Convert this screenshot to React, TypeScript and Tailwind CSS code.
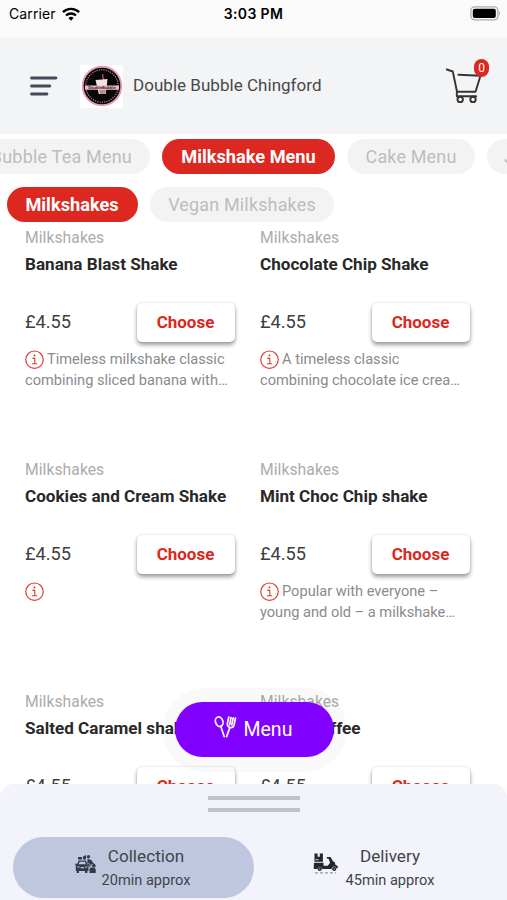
import React from "react";

type Product = { name: string; lines: string[] };

const products: Product[] = [
  { name: "Banana Blast Shake", lines: ["Timeless milkshake classic", "combining sliced banana with…"] },
  { name: "Chocolate Chip Shake", lines: ["A timeless classic", "combining chocolate ice crea…"] },
  { name: "Cookies and Cream Shake", lines: [] },
  { name: "Mint Choc Chip shake", lines: ["Popular with everyone –", "young and old – a milkshake…"] },
  { name: "Salted Caramel shake", lines: [] },
  { name: "Sticky Toffee", lines: [] },
];

function InfoIcon() {
  return (
    <svg className="mr-[3px] h-[20px] w-[19px] shrink-0" viewBox="0 0 19 20" fill="none" stroke="#dc3a35">
      <circle cx="9.5" cy="9.7" r="8.7" strokeWidth="1.2" />
      <path d="M7.3 8.4h2.5v5.3M7 13.7h5.2" strokeWidth="1.1" />
      <circle cx="9.4" cy="5.5" r="1" fill="#dc3a35" stroke="none" />
    </svg>
  );
}

function StatusBar() {
  return (
    <div className="flex h-[38px] shrink-0 items-start bg-[#fafafa] font-['Inter',sans-serif] text-black">
      <div className="flex w-[170px] items-center pt-[4px] pl-[9px]">
        <span className="text-[14px] leading-[20px] tracking-[0.1px]">Carrier</span>
        <svg className="ml-[6px] h-[14px] w-[18px]" viewBox="0 0 18 14" fill="none" stroke="#000">
          <path d="M.9 5.2a11.6 11.6 0 0 1 16.2 0" strokeWidth="2.4" />
          <path d="M4 8.5a7.3 7.3 0 0 1 10 0" strokeWidth="2.3" />
          <path d="M6.4 10.9a4 4 0 0 1 5.2 0L9 13.7z" fill="#000" stroke="none" />
        </svg>
      </div>
      <div className="flex-1 pt-[4px] text-center text-[14px] leading-[20px] font-semibold tracking-[0.35px]">3:03 PM</div>
      <div className="flex w-[170px] justify-end pt-[6px] pr-[6px]">
        <svg className="h-[15px] w-[31px]" viewBox="0 0 31 15">
          <rect x=".9" y=".9" width="27" height="13" rx="3.8" fill="#fafafa" stroke="#aaa" strokeWidth="1.3" />
          <rect x="2.8" y="2.7" width="23" height="9.4" rx="2" />
          <path d="M29 5q2 2.4 0 4.8z" fill="#aaa" />
        </svg>
      </div>
    </div>
  );
}

function Logo() {
  return (
    <svg className="ml-[22px] h-[43px] w-[43px]" viewBox="0 0 43 43">
      <path d="M0 0h43v43H0z" fill="#fff" />
      <circle cx="22" cy="21" r="19.3" fill="#080608" stroke="#ea9ab2" strokeWidth="1.9" />
      <circle cx="22" cy="21" r="16.2" fill="none" stroke="#999" strokeWidth="1.3" strokeDasharray="1.1 1.2" strokeDashoffset="1" />
      <path d="m23.5 15-1-6" stroke="#d94d75" strokeWidth="1.2" />
      <path d="m15.5 15 12-1-1.7 15h-7z" fill="#eee4e5" />
      <path d="m19 25 7-.5-.6 4.5H20z" fill="#b4908b" />
      <path d="M5 20.5h34v4.2H5z" fill="#e9b9c5" />
      <text x="22" y="24.1" textAnchor="middle" fontFamily="Roboto, sans-serif" fontSize="4.4" fontWeight="700" fill="#4a3038">DoubleBubble</text>
    </svg>
  );
}

function Header() {
  return (
    <header className="flex h-[96px] shrink-0 items-center bg-[#f3f4f6] pl-[30px]">
      <svg className="h-[20px] w-[28px]" viewBox="0 0 28 20" stroke="#454959" strokeWidth="2.9" strokeLinecap="round">
        <path d="M1.5 2h24.4M1.5 10h18.3M1.5 18h15.4" />
      </svg>
      <Logo />
      <span className="ml-[10px] text-[17px] tracking-[0.03px] whitespace-nowrap text-[#484848]">Double Bubble Chingford</span>
      <div className="relative -mt-[10px] mr-[18px] ml-auto h-[48px] w-[44px]">
        <svg className="h-[48px] w-[44px]" viewBox="0 0 44 48" fill="none" stroke="#343434" strokeWidth="1.9" strokeLinecap="round" strokeLinejoin="round">
          <path d="m1.8 12.5 6 2 4.2 20.3h18.5l5-16L13.4 17.8" />
          <path d="M11.8 34.8v4.4h19.4" />
          <circle cx="15.2" cy="42.4" r="2.7" />
          <circle cx="28" cy="42.4" r="2.7" />
        </svg>
        <span className="absolute top-[2px] left-[29px] flex h-[18px] w-[15px] items-center justify-center rounded-full bg-[#dc2820] text-[12px] text-white">0</span>
      </div>
    </header>
  );
}

const pill = "flex h-[35px] shrink-0 items-center justify-center rounded-full whitespace-nowrap";
const idle = "bg-[#f3f3f3] text-[18px] text-[#bdbdbd]";
const active = "bg-[#dc2820] text-[18.2px] font-bold text-white";

function Tabs() {
  return (
    <>
      <div className="mt-[5px] flex shrink-0 gap-[12px] overflow-hidden">
        <div className={`${pill} ${idle} -ml-[30px] w-[180px] justify-end pr-[18px] tracking-[0.2px]`}>Bubble Tea Menu</div>
        <div className={`${pill} ${active} w-[173px]`}>Milkshake Menu</div>
        <div className={`${pill} ${idle} w-[128px] tracking-[0.15px]`}>Cake Menu</div>
        <div className={`${pill} ${idle} w-[100px] justify-start pl-[17px]`}>Juices</div>
      </div>
      <div className="mt-[13px] flex shrink-0 gap-[12px] pl-[7px]">
        <div className={`${pill} ${active} w-[131px] pr-[1px]`}>Milkshakes</div>
        <div className={`${pill} ${idle} w-[184px] tracking-[0.15px]`}>Vegan Milkshakes</div>
      </div>
    </>
  );
}

function ProductCard({ product }: { product: Product }) {
  return (
    <article className="h-[232px] w-[210px]">
      <p className="h-[20px] pt-[1px] text-[15.7px] leading-[20px] tracking-[0.05px] text-[#acacac]">Milkshakes</p>
      <h3 className="mt-[5px] text-[17.1px] leading-[24px] font-bold whitespace-nowrap text-[#292929]">{product.name}</h3>
      <div className="mt-[26px] flex h-[40px] items-center justify-between">
        <span className="text-[18.2px] text-[#404040]">£4.55</span>
        <button className="h-[39px] w-[98px] rounded-[5px] bg-white pt-[1px] pr-[1px] text-[17px] font-bold text-[#dc2820] shadow-[0_3px_4px_rgba(0,0,0,0.38),0_0_2px_rgba(0,0,0,0.18)]">Choose</button>
      </div>
      <div className="mt-[7px] text-[14.6px] leading-[21px] whitespace-nowrap text-[#8a8a8f]">
        <div className="flex h-[21px] items-center">
          <InfoIcon />
          {product.lines[0]}
        </div>
        <div>{product.lines[1]}</div>
      </div>
    </article>
  );
}

function MenuButton() {
  return (
    <div className="absolute top-[688px] left-[162px] flex h-[84px] w-[185px] justify-center rounded-full bg-black/[0.022] pt-[14px]">
      <button className="-ml-[1px] flex h-[55px] w-[159px] items-center rounded-full bg-[#8200ff] pl-[39px] text-[19.5px] text-white">
        <svg className="-mt-[6px] mr-[7px] h-[24px] w-[23px]" viewBox="0 0 23 24" fill="none" stroke="#fff" strokeWidth="1.7" strokeLinecap="round" strokeLinejoin="round">
          <ellipse cx="5.2" cy="6.7" rx="3.7" ry="4.9" transform="rotate(-18 5.2 6.7)" />
          <path d="m6.8 11.4 3.4 10.2M15.8 12.6l-3.2 9M14.8 2l-1.4 6.1q-.4 3.6 2.6 4.3 3.1.7 4-2.2L21.5 3M17 2.6l-1.3 7M19.3 2.8l-1.5 7" />
        </svg>
        Menu
      </button>
    </div>
  );
}

function CollectionIcon() {
  return (
    <svg className="h-[20px] w-[21px]" viewBox="0 0 21 20" fill="#34394a">
      <path d="M3 3h4v2.4H3zM8 2.5l3-1.5v4.4H8z" />
      <path d="M3.6 6.4h7.3l1.6 4.1 1 1V17h-1.2v2H10v-2H4v2H1.7v-2H.8v-5.5l-.6-.9V9.7h2.1z" />
      <path d="m4.6 7.8-.9 2.5h7.1l-.9-2.5z" fill="#bfc7df" />
      <path d="M2.3 13h2.3M10 13h2.3M5.6 13.6h3.4" stroke="#bfc7df" strokeWidth="1.2" />
      <circle cx="13.4" cy="2.8" r="1.7" />
      <path d="M12.4 5.2h2q2.6.4 3.4 3.3l2.7 2.3v2.3l-2 .4-2.3-2-1.8 1.5-2-3.3z" />
      <path d="m13.3 9 2.5 2.3 2-.8" fill="none" stroke="#bfc7df" strokeWidth=".9" />
      <path d="M15.2 13.6h4.3l1.2 2V19h-6.2v-3.4z" />
    </svg>
  );
}

function DeliveryIcon() {
  return (
    <svg className="h-[21px] w-[26px]" viewBox="0 0 26 21" fill="#24262d">
      <path d="M1.5.5h3.1v3.2h2.2V.5h3.1v8.3H1.5z" />
      <path d="M2.5 6.7h3" stroke="#f2f3fb" strokeWidth=".9" />
      <path d="M1 9.8h9.5v3h4.2l2.4-3-1.5-4-1.8-.3V4h3.7L20 8.2l2 1.2.2 2 2.8 2-.5 1.9h-1.2q-1.1-2.6-3.5-1.3-1 .6-1.1 2H9q-.6-2.4-2.6-2.2Q4.6 14 4.4 16H.8v-3z" />
      <circle cx="6.7" cy="16" r="2.1" />
      <circle cx="21.2" cy="16" r="2.1" />
      <circle cx="6.7" cy="16" r=".6" fill="#f2f3fb" />
      <circle cx="21.2" cy="16" r=".6" fill="#f2f3fb" />
      <path d="M2 19.9h21" fill="none" stroke="#777" strokeWidth=".9" strokeDasharray="3 2" />
    </svg>
  );
}

function BottomSheet() {
  return (
    <div className="z-10 -mt-[116px] h-[116px] shrink-0 rounded-t-[14px] bg-[#f2f3fb] pt-[12px]">
      <div className="mx-auto flex w-[92px] flex-col gap-[8px]">
        <i className="h-[4px] bg-[#c2c3c8]" />
        <i className="h-[4px] bg-[#c2c3c8]" />
      </div>
      <div className="mt-[25px] flex pl-[13px] text-[#424349]">
        <div className="flex h-[61px] w-[241px] items-center rounded-full bg-[#bfc7df] pl-[62px]">
          <div className="mt-[-8px] w-[21px]"><CollectionIcon /></div>
          <div className="ml-[5px] w-[90px] text-center whitespace-nowrap">
            <div className="text-[17.1px] leading-[24px] tracking-[0.04px]">Collection</div>
            <div className="pt-[1px] text-[14.6px] leading-[23px]">20min approx</div>
          </div>
        </div>
        <div className="flex h-[61px] w-[241px] items-center pl-[59px]">
          <div className="mt-[-9px] w-[26px]"><DeliveryIcon /></div>
          <div className="ml-[6px] w-[90px] text-center whitespace-nowrap">
            <div className="text-[17.1px] leading-[24px] tracking-[0.04px]">Delivery</div>
            <div className="pt-[1px] text-[14.6px] leading-[23px]">45min approx</div>
          </div>
        </div>
      </div>
    </div>
  );
}

export default function App() {
  return (
    <div className="relative flex h-[900px] w-[507px] flex-col overflow-hidden bg-white font-['Roboto',sans-serif]">
      <StatusBar />
      <Header />
      <Tabs />
      <main className="mt-[5px] grid min-h-0 flex-1 grid-cols-[210px_210px] content-start gap-x-[25px] overflow-hidden pl-[25px]">
        {products.map((p) => <ProductCard key={p.name} product={p} />)}
      </main>
      <MenuButton />
      <BottomSheet />
    </div>
  );
}
